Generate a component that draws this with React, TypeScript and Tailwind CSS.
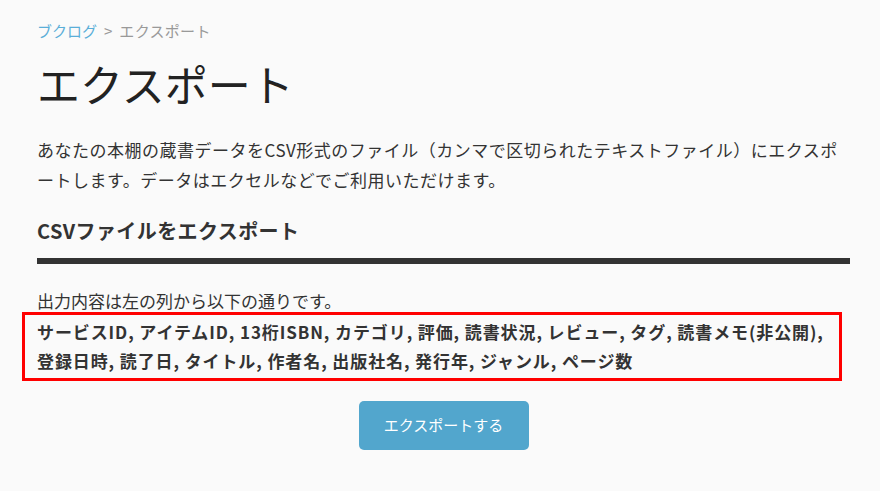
import React from "react";

export default function App() {
  return (
    <div
      className="min-h-[491px] w-full bg-[#fafafa] text-[#333]"
      style={{ fontFamily: '"Noto Sans CJK JP", "Noto Sans", sans-serif' }}
    >
      <div className="w-[813px] pt-[20px] ml-[37px]">
        <nav className="h-[22px] text-[15px] leading-[22px] text-[#999]">
          <a className="text-[#5aaed8]" href="#">
            ブクログ
          </a>
          <span className="mx-[7px]">&gt;</span>
          <span className="tracking-[0.3px]">エクスポート</span>
        </nav>
        <h1 className="mt-[15px] h-[52px] text-[43px] font-normal leading-[52px] text-[#222]">
          エクスポート
        </h1>
        <p className="mt-[26px] text-[17px] leading-[30px] tracking-[0.5px]">
          あなたの本棚の蔵書データをCSV形式のファイル（カンマで区切られたテキストファイル）にエクスポートします。データはエクセルなどでご利用いただけます。
        </p>
        <h2 className="mt-[21px] text-[20px] font-bold leading-[30px] tracking-[0.4px] text-[#333]">
          CSVファイルをエクスポート
        </h2>
        <div className="mt-[12px] h-[6px] w-full bg-[#333]" />
        <p className="mt-[26px] text-[17px] leading-[22px]">
          出力内容は左の列から以下の通りです。
        </p>
        <div className="ml-[-15px] w-[820px] border-[3px] border-[#ff0000] pb-[3px] pl-[12px] pt-[2px] text-[17px] font-bold leading-[29px] tracking-[0.9px] whitespace-nowrap">
          サービスID, アイテムID, 13桁ISBN, カテゴリ, 評価, 読書状況, レビュー, タグ, 読書メモ(非公開),
          <br />
          登録日時, 読了日, タイトル, 作者名, 出版社名, 発行年, ジャンル, ページ数
        </div>
        <div className="mt-[20px] flex justify-center">
          <button
            type="button"
            className="h-[49px] w-[170px] rounded-[5px] bg-[#52a6cd] text-[15px] text-white"
          >
            エクスポートする
          </button>
        </div>
      </div>
    </div>
  );
}
